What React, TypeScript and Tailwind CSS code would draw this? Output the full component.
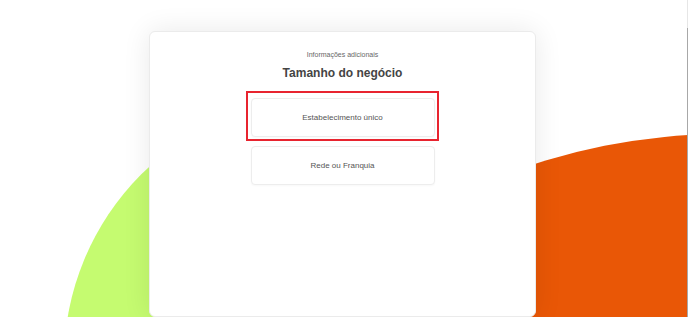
const options = ['Estabelecimento único', 'Rede ou Franquia'];

export default function App() {
  return (
    <div className="relative h-[317px] w-full overflow-hidden bg-white" style={{ fontFamily: '"Liberation Sans", Arial, sans-serif' }}>
      {/* background blobs */}
      <div className="absolute left-[64px] top-[97px] h-[528px] w-[528px] rounded-full bg-[#c5fb70]" />
      <div className="absolute left-[107px] top-[134px] h-[1236px] w-[1236px] rounded-full bg-[#e95706]" />

      <div className="relative z-10 ml-[149px] mt-[31px] flex h-[286px] w-[387px] flex-col items-center rounded-[6px] border border-[#ebebeb] bg-white pt-[18px] shadow-[0_0_28px_rgba(0,0,0,0.09)]">
        <p className="text-[7px] leading-[10px] text-[#666]">Informações adicionais</p>
        <h1 className="mt-[6px] text-[12px] font-bold leading-[15px] text-[#444]">Tamanho do negócio</h1>

        <div className="mt-[17px] flex flex-col gap-[9px]">
          {options.map((label, i) => (
            <div key={label} className="relative">
              {i === 0 && (
                <div className="pointer-events-none absolute -left-[5px] -right-[4px] -top-[7px] -bottom-[4px] border-2 border-[#e8242f]" />
              )}
              <button className="flex h-[39px] w-[184px] items-center justify-center rounded-[4px] border border-[#ededed] bg-white text-[8px] text-[#555] shadow-[0_1px_2px_rgba(0,0,0,0.03)]">
                {label}
              </button>
            </div>
          ))}
        </div>
      </div>

      {/* window edge */}
      <div className="absolute right-0 top-0 h-full w-px bg-[#e6e6e6]">
        <div className="mt-[28px] h-full w-px bg-[#a8a8a8]" />
      </div>
    </div>
  );
}
